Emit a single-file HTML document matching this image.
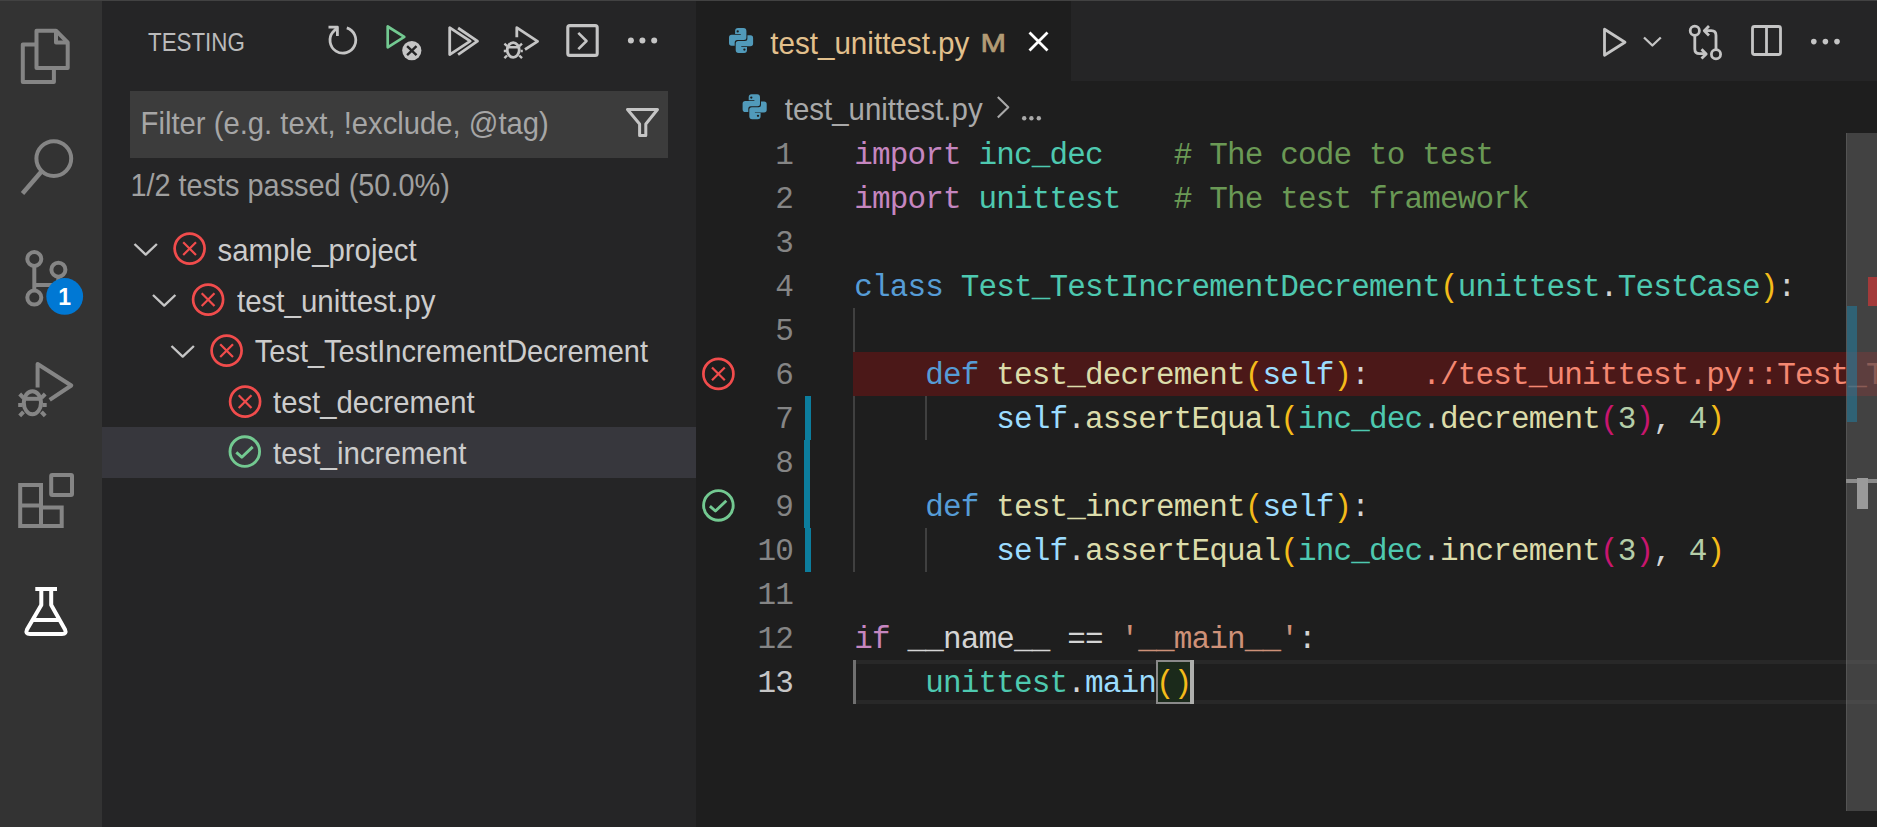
<!DOCTYPE html>
<html><head><meta charset="utf-8">
<style>
*{margin:0;padding:0;box-sizing:border-box}
html,body{width:1877px;height:827px;overflow:hidden;background:#1e1e1e}
body{position:relative;font-family:"Liberation Sans",sans-serif}
.a{position:absolute}
svg{position:absolute;left:0;top:0;overflow:visible}
text{font-family:"Liberation Sans",sans-serif;white-space:pre}
.ln{position:absolute;left:700px;width:93px;text-align:right;font-family:"Liberation Mono",monospace;font-size:31px;letter-spacing:-0.85px;line-height:44px;height:44px;color:#858585;white-space:pre}
.cl{position:absolute;font-family:"Liberation Mono",monospace;font-size:31px;letter-spacing:-0.85px;line-height:44px;height:44px;color:#d4d4d4;white-space:pre}
.kw{color:#c586c0}.ty{color:#4ec9b0}.cm{color:#6a9955}.st{color:#569cd6}.fn{color:#dcdcaa}.vr{color:#9cdcfe}.nm{color:#b5cea8}.sr{color:#ce9178}.b1{color:#f4bb1a}.b2{color:#c8166f}.er{color:#f48771}
#editor{position:absolute;left:696px;top:81px;width:1181px;height:746px;overflow:hidden}
</style></head><body>
<!-- top border -->
<div class="a" style="left:0;top:0;width:1877px;height:1px;background:#424242"></div>
<!-- activity bar -->
<div class="a" style="left:0;top:1px;width:102px;height:826px;background:#333333"></div>
<!-- sidebar -->
<div class="a" style="left:102px;top:1px;width:594px;height:826px;background:#252526"></div>
<div class="a" style="left:130px;top:91px;width:538px;height:67px;background:#3c3c3c"></div>
<div class="a" style="left:102px;top:427px;width:594px;height:51px;background:#37373d"></div>
<!-- tab bar -->
<div class="a" style="left:696px;top:1px;width:1181px;height:80px;background:#252526"></div>
<div class="a" style="left:696px;top:1px;width:375px;height:80px;background:#1e1e1e"></div>

<!-- EDITOR decorations -->
<!-- indent guides -->
<div class="a" style="left:853.4px;top:308px;width:2px;height:264px;background:#404040"></div>
<div class="a" style="left:925px;top:396px;width:2px;height:44px;background:#404040"></div>
<div class="a" style="left:925px;top:528px;width:2px;height:44px;background:#404040"></div>
<!-- error line bg -->
<div class="a" style="left:853.4px;top:352px;width:1024px;height:44px;background:#4b1818"></div>
<!-- current line borders -->
<div class="a" style="left:856px;top:660px;width:1021px;height:4px;background:#282828"></div>
<div class="a" style="left:856px;top:700px;width:1021px;height:4px;background:#282828"></div>
<div class="a" style="left:853px;top:660px;width:3px;height:44px;background:#707070"></div>
<!-- bracket match -->
<div class="a" style="left:1156px;top:660px;width:38px;height:44px;background:#1b2a1b;border:2px solid #8a8a8a"></div>
<div class="a" style="left:1189.5px;top:660px;width:4.5px;height:44px;background:#aeafad"></div>
<!-- modified gutter bar -->
<div class="a" style="left:805px;top:396px;width:6px;height:44px;background:#0c7d9d"></div>
<div class="a" style="left:804px;top:440px;width:6px;height:88px;background:#0c7d9d"></div>
<div class="a" style="left:805px;top:528px;width:6px;height:44px;background:#0c7d9d"></div>

<div class="ln" style="top:134.00px;color:#858585">1</div>
<div class="cl" style="top:134.00px;left:854.20px"><span class="kw">import</span> <span class="ty">inc_dec</span>    <span class="cm"># The code to test</span></div>
<div class="ln" style="top:178.00px;color:#858585">2</div>
<div class="cl" style="top:178.00px;left:854.20px"><span class="kw">import</span> <span class="ty">unittest</span>   <span class="cm"># The test framework</span></div>
<div class="ln" style="top:222.00px;color:#858585">3</div>
<div class="ln" style="top:266.00px;color:#858585">4</div>
<div class="cl" style="top:266.00px;left:854.20px"><span class="st">class</span> <span class="ty">Test_TestIncrementDecrement</span><span class="b1">(</span><span class="ty">unittest</span>.<span class="ty">TestCase</span><span class="b1">)</span>:</div>
<div class="ln" style="top:310.00px;color:#858585">5</div>
<div class="ln" style="top:354.00px;color:#858585">6</div>
<div class="cl" style="top:354.00px;left:854.20px">    <span class="st">def</span> <span class="fn">test_decrement</span><span class="b1">(</span><span class="vr">self</span><span class="b1">)</span>:</div>
<div class="ln" style="top:398.00px;color:#858585">7</div>
<div class="cl" style="top:398.00px;left:854.20px">        <span class="vr">self</span>.<span class="fn">assertEqual</span><span class="b1">(</span><span class="ty">inc_dec</span>.<span class="fn">decrement</span><span class="b2">(</span><span class="nm">3</span><span class="b2">)</span>, <span class="nm">4</span><span class="b1">)</span></div>
<div class="ln" style="top:442.00px;color:#858585">8</div>
<div class="ln" style="top:486.00px;color:#858585">9</div>
<div class="cl" style="top:486.00px;left:854.20px">    <span class="st">def</span> <span class="fn">test_increment</span><span class="b1">(</span><span class="vr">self</span><span class="b1">)</span>:</div>
<div class="ln" style="top:530.00px;color:#858585">10</div>
<div class="cl" style="top:530.00px;left:854.20px">        <span class="vr">self</span>.<span class="fn">assertEqual</span><span class="b1">(</span><span class="ty">inc_dec</span>.<span class="fn">increment</span><span class="b2">(</span><span class="nm">3</span><span class="b2">)</span>, <span class="nm">4</span><span class="b1">)</span></div>
<div class="ln" style="top:574.00px;color:#858585">11</div>
<div class="ln" style="top:618.00px;color:#858585">12</div>
<div class="cl" style="top:618.00px;left:854.20px"><span class="kw">if</span> __name__ == <span class="sr">'__main__'</span>:</div>
<div class="ln" style="top:662.00px;color:#c6c6c6">13</div>
<div class="cl" style="top:662.00px;left:854.20px">    <span class="ty">unittest</span>.<span class="vr">main</span><span class="b1">()</span></div>
<div class="cl er" style="top:354.00px;left:1422.20px;width:423.80px;overflow:hidden">./test_unittest.py::Test_TestIncrementDecrement::test_decrement</div>
<div class="a" style="left:1846px;top:354.00px;width:31px;height:44px;overflow:hidden;opacity:0.45"><div class="cl er" style="top:0;left:-423.80px">./test_unittest.py::Test_TestIncrementDecrement::test_decrement</div></div>

<!-- scrollbar / overview ruler -->
<div class="a" style="left:1846px;top:133px;width:31px;height:678px;background:rgba(121,121,121,0.4);border-left:1px solid rgba(127,127,127,0.3)"></div>
<div class="a" style="left:1868px;top:277px;width:9px;height:29px;background:#a33a3a"></div>
<div class="a" style="left:1846.6px;top:306px;width:10.2px;height:116px;background:rgba(27,129,168,0.5)"></div>
<div class="a" style="left:1846px;top:478.5px;width:31px;height:4px;background:#8c8c8c"></div>
<div class="a" style="left:1857px;top:478px;width:11px;height:31px;background:#9a9a9a"></div>

<svg width="1877" height="827" viewBox="0 0 1877 827" fill="none" stroke-linecap="butt" stroke-linejoin="round">
<!-- ACTIVITY BAR ICONS -->
<g stroke="#858585" stroke-width="4">
 <path d="M36.5 30.7 H56 L67.7 42.5 V68.1 H36.5 Z"/>
 <path d="M56 30.7 V42.5 H67.7"/>
 <path d="M36.5 44.5 H22.8 V81.9 H53.9 V68.1"/>
 <circle cx="53.8" cy="158.6" r="17.4"/>
 <path d="M41.5 171.5 L22.5 193.5" stroke-width="4.5"/>
 <circle cx="34.3" cy="259" r="7"/>
 <circle cx="58.4" cy="269.7" r="7"/>
 <circle cx="34.3" cy="297.6" r="7"/>
 <path d="M34.3 266 V290.6"/>
 <path d="M58.4 276.7 V279 Q58.4 285 52 285 H34.3"/>
 <path d="M37.6 387.5 V364 L71.3 385.5 L49.7 399.8"/>
 <ellipse cx="32.4" cy="402.7" rx="8.6" ry="11.5"/>
 <path d="M24 398.8 H41"/>
 <path d="M18.2 405 H22.6 M42.4 405 H46.7 M19.7 394 L23.5 397.9 M45.2 394 L41.4 397.9 M19.7 415.8 L23.5 411.9 M45.2 415.8 L41.4 411.9"/>
 <path d="M20.2 484.9 H41 V507.6 H61.7 V525.9 H20.2 Z M20.2 505.6 H41 M41 505.6 V525.9" stroke-linejoin="miter"/>
 <rect x="51.2" y="474.9" width="20.8" height="20" rx="1"/>
</g>
<circle cx="64.7" cy="296.4" r="18.4" fill="#0078d4"/>
<text x="58.2" y="304.5" font-size="23" font-weight="bold" fill="#ffffff">1</text>
<g stroke="#ffffff" stroke-width="4">
 <path d="M35.3 589 H57 M41.3 591 V605 L27 629.5 Q25 634 30 634 H62 Q67 634 65 629.5 L51.2 605 V591 M32 620 H60"/>
</g>

<!-- SIDEBAR HEADER ICONS -->
<g stroke="#c5c5c5" stroke-width="2.8">
 <path d="M328.5 27.2 H337.4 V36"/>
 <path d="M346.8 27.9 A12.9 12.9 0 1 1 333 31.9 L337.4 27.4"/>
 <path d="M449.7 27.7 V54.6 L470.2 41.2 Z"/>
 <path d="M458.1 28 L477.5 41.2 L458.1 54.6"/>
 <path d="M516.8 37.3 V27.7 L537.6 41.3 L525 49.5"/>
 <ellipse cx="513.2" cy="50" rx="6" ry="7.3"/>
 <path d="M507.5 47.3 H519 M503.8 51 H506 M520.6 51 H522.8 M504.4 43.7 L507.1 46.1 M522 43.7 L519.3 46.1 M504.4 58.2 L507.1 55.5 M522 58.2 L519.3 55.5" stroke-width="2.4"/>
 <rect x="567.8" y="25.6" width="29.4" height="29.8" rx="2" stroke-width="3.1"/>
 <path d="M578.3 32.8 L586.5 41 L578.3 49.1" stroke-width="2.6"/>
 <path d="M627.5 109.5 H657.5 L645.8 124 V135.5 H639.6 V124 Z" stroke-width="3"/>
</g>
<g fill="#c5c5c5"><circle cx="630.9" cy="40.4" r="3"/><circle cx="642.4" cy="40.4" r="3"/><circle cx="654.2" cy="40.4" r="3"/></g>
<path d="M387.7 26.5 V47.3 L404.3 36.9 Z" stroke="#73c991" stroke-width="2.7"/>
<circle cx="411.8" cy="50.6" r="9.6" fill="#c5c5c5"/>
<path d="M407.1 46.1 L416.5 55.1 M416.5 46.1 L407.1 55.1" stroke="#252526" stroke-width="2.4"/>
<!-- tree chevrons -->
<g stroke="#c5c5c5" stroke-width="2.4">
 <path d="M134.5 244 L145.7 254.6 L156.9 244"/>
 <path d="M153 295 L164.2 305.6 L175.4 295"/>
 <path d="M171.5 346 L182.7 356.6 L193.9 346"/>
</g>
<!-- status icons -->
<g stroke="#f14c4c" stroke-width="2.7">
<!--x-->
 <circle cx="189.6" cy="248.6" r="15"/><path d="M183.2 242.2 L196 255 M196 242.2 L183.2 255" stroke-width="2.2"/>
 <circle cx="208.1" cy="299.6" r="15"/><path d="M201.7 293.2 L214.5 306 M214.5 293.2 L201.7 306" stroke-width="2.2"/>
 <circle cx="226.6" cy="350.6" r="15"/><path d="M220.2 344.2 L233 357 M233 344.2 L220.2 357" stroke-width="2.2"/>
 <circle cx="245.1" cy="401.6" r="15"/><path d="M238.7 395.2 L251.5 408 M251.5 395.2 L238.7 408" stroke-width="2.2"/>
 <circle cx="718.4" cy="373.9" r="15"/><path d="M712 367.5 L724.8 380.3 M724.8 367.5 L712 380.3" stroke-width="2.2"/>
</g>
<g stroke="#73c991" stroke-width="2.9">
 <circle cx="244.8" cy="451.6" r="14.8"/><path d="M236.3 452.4 L241.8 457.2 L252.7 446.9"/>
 <circle cx="718.4" cy="505.4" r="14.8"/><path d="M709.9 506.2 L715.4 511 L726.3 500.7"/>
</g>

<!-- TAB -->
<g transform="translate(729,28) scale(1.0)" fill="#519aba"><path d="M6.1 3 Q6.1 0 9 0 H14.5 Q17.4 0 17.4 3 V9.5 Q17.4 12 14.9 12 H8.2 Q5.7 12 5.7 14.5 V17.8 H2.6 Q0 17.8 0 15 V9.4 Q0 6.7 2.7 6.7 H11.8 V6.1 H6.1 Z"/><path d="M6.1 3 Q6.1 0 9 0 H14.5 Q17.4 0 17.4 3 V9.5 Q17.4 12 14.9 12 H8.2 Q5.7 12 5.7 14.5 V17.8 H2.6 Q0 17.8 0 15 V9.4 Q0 6.7 2.7 6.7 H11.8 V6.1 H6.1 Z" transform="rotate(180 12.05 12.5)"/><circle cx="8.7" cy="3.4" r="1.15" fill="#1e1e1e"/><circle cx="15.4" cy="21.6" r="1.15" fill="#1e1e1e"/></g>
<g transform="translate(742.6,94.2) scale(1.0)" fill="#519aba"><path d="M6.1 3 Q6.1 0 9 0 H14.5 Q17.4 0 17.4 3 V9.5 Q17.4 12 14.9 12 H8.2 Q5.7 12 5.7 14.5 V17.8 H2.6 Q0 17.8 0 15 V9.4 Q0 6.7 2.7 6.7 H11.8 V6.1 H6.1 Z"/><path d="M6.1 3 Q6.1 0 9 0 H14.5 Q17.4 0 17.4 3 V9.5 Q17.4 12 14.9 12 H8.2 Q5.7 12 5.7 14.5 V17.8 H2.6 Q0 17.8 0 15 V9.4 Q0 6.7 2.7 6.7 H11.8 V6.1 H6.1 Z" transform="rotate(180 12.05 12.5)"/><circle cx="8.7" cy="3.4" r="1.15" fill="#1e1e1e"/><circle cx="15.4" cy="21.6" r="1.15" fill="#1e1e1e"/></g>
<path d="M1029.5 32.5 L1047.5 50.5 M1047.5 32.5 L1029.5 50.5" stroke="#ffffff" stroke-width="2.8"/>
<path d="M997.8 97 L1008.3 107.3 L997.8 117.6" stroke="#a9a9a9" stroke-width="2.1"/>
<g fill="#a9a9a9"><circle cx="1024.2" cy="118.2" r="2.2"/><circle cx="1031.4" cy="118.2" r="2.2"/><circle cx="1038.8" cy="118.2" r="2.2"/></g>

<!-- EDITOR ACTIONS -->
<g stroke="#c5c5c5" stroke-width="2.8">
 <path d="M1604.5 29.3 V55.3 L1625 42.3 Z"/>
 <path d="M1644 37.5 L1652.4 45.5 L1660.8 37.5" stroke-width="2.3"/>
 <circle cx="1694.8" cy="30.7" r="4.6"/>
 <circle cx="1716" cy="54.3" r="4.6"/>
 <path d="M1694.8 35.3 V49 Q1694.8 53.7 1699.5 53.7 H1706"/>
 <path d="M1701.5 49.2 L1706.2 53.9 L1701.5 58.6"/>
 <path d="M1716 49.7 V35.5 Q1716 30.7 1711.3 30.7 H1704.5"/>
 <path d="M1709 26 L1704.3 30.7 L1709 35.4"/>
 <rect x="1752.5" y="26.5" width="28" height="28" rx="2"/>
 <path d="M1766.5 26.5 V54.5"/>
</g>
<g fill="#c5c5c5"><circle cx="1813.8" cy="41.6" r="2.8"/><circle cx="1825.4" cy="41.6" r="2.8"/><circle cx="1837" cy="41.6" r="2.8"/></g>

<text id="t_testing" x="148.00" y="51" font-size="26" fill="#bbbbbb" textLength="96.82" lengthAdjust="spacingAndGlyphs">TESTING</text>
<text id="t_filter" x="140.60" y="134.2" font-size="30.5" fill="#a6a6a6" textLength="408.23" lengthAdjust="spacingAndGlyphs">Filter (e.g. text, !exclude, @tag)</text>
<text id="t_passed" x="130.40" y="195.8" font-size="30.5" fill="#a0a0a0" textLength="319.43" lengthAdjust="spacingAndGlyphs">1/2 tests passed (50.0%)</text>
<text id="t_r0" x="217.60" y="260.5" font-size="30.5" fill="#cccccc" textLength="199.00" lengthAdjust="spacingAndGlyphs">sample_project</text>
<text id="t_r1" x="237.00" y="311.5" font-size="30.5" fill="#cccccc" textLength="198.40" lengthAdjust="spacingAndGlyphs">test_unittest.py</text>
<text id="t_r2" x="254.80" y="362.2" font-size="30.5" fill="#cccccc" textLength="393.20" lengthAdjust="spacingAndGlyphs">Test_TestIncrementDecrement</text>
<text id="t_r3" x="273.00" y="413.3" font-size="30.5" fill="#cccccc" textLength="201.60" lengthAdjust="spacingAndGlyphs">test_decrement</text>
<text id="t_r4" x="273.00" y="464.3" font-size="30.5" fill="#cccccc" textLength="193.40" lengthAdjust="spacingAndGlyphs">test_increment</text>
<text id="t_tab" x="770.20" y="53.7" font-size="30.5" fill="#e2c08d" textLength="199.21" lengthAdjust="spacingAndGlyphs">test_unittest.py</text>
<text id="t_M" x="980.60" y="52" font-size="26.5" fill="#b39b74" textLength="25.55" lengthAdjust="spacingAndGlyphs" stroke="#b39b74" stroke-width="0.7">M</text>
<text id="t_bc" x="784.80" y="119.7" font-size="30.5" fill="#a9a9a9" textLength="197.81" lengthAdjust="spacingAndGlyphs">test_unittest.py</text>
</svg>
</body></html>
